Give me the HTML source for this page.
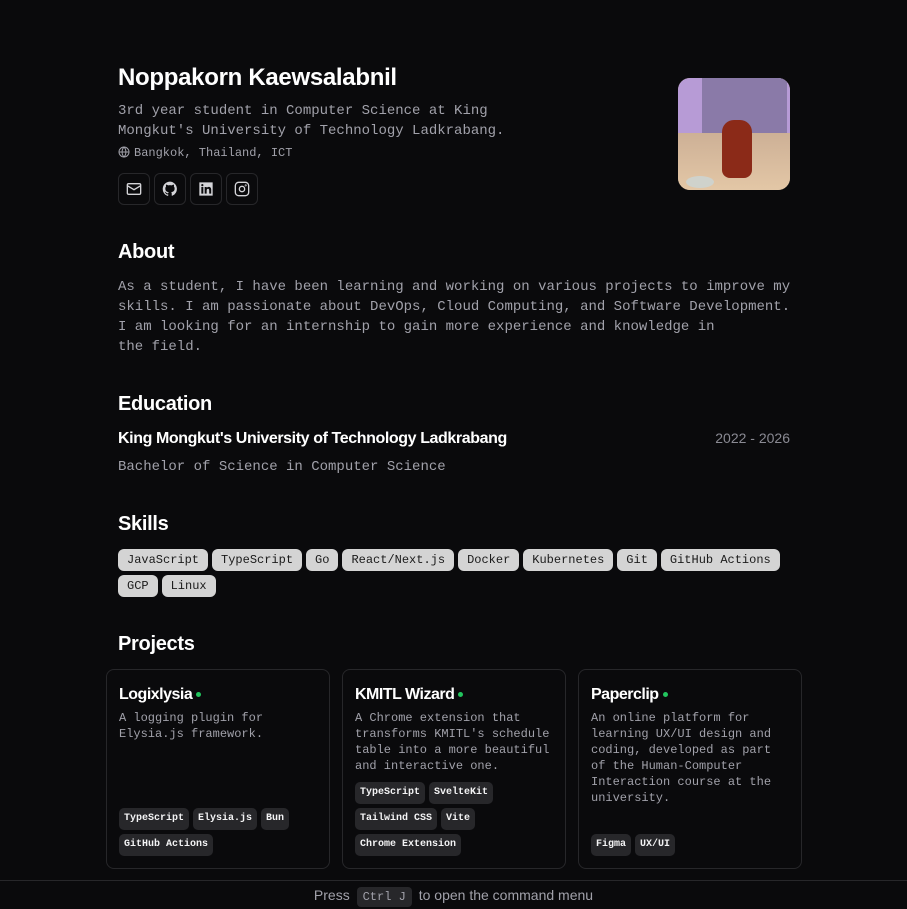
<!DOCTYPE html>
<html><head><meta charset="utf-8"><style>
*{box-sizing:border-box;margin:0;padding:0}
body{width:907px;height:907px;background:#0a0a0c;color:#fff;font-family:"Liberation Sans",sans-serif;position:relative;overflow:hidden}
.mono{font-family:"Liberation Mono",monospace}
.abs{position:absolute}
h1{position:absolute;left:118px;top:64px;font-size:24px;font-weight:700;letter-spacing:-0.3px}
h2{position:absolute;left:118px;font-size:20px;font-weight:700;letter-spacing:-0.3px}
.gray{color:#a1a1aa}
.icon{position:absolute;top:173px;width:32px;height:32px;border:1px solid #27272a;border-radius:6px;display:flex;align-items:center;justify-content:center}
.badge{display:inline-block;background:#d4d4d4;color:#1a1a1a;font-size:12px;height:22px;line-height:22px;padding:0 9px;border-radius:6px;margin:0 4px 4px 0;font-family:"Liberation Mono",monospace}
.card{position:absolute;top:669px;width:224px;height:200px;border:1px solid #27272a;border-radius:8px;padding:12px}
.card .t{font-size:16px;font-weight:700;letter-spacing:-0.5px;margin-top:4px;height:20px}
.card .t i{display:inline-block;width:5px;height:5px;border-radius:50%;background:#22c55e;margin-left:4px;vertical-align:middle}
.card .d{font-family:"Liberation Mono",monospace;font-size:12px;line-height:16px;color:#a1a1aa;margin-top:4px}
.tags{position:absolute;left:12px;bottom:8px;width:200px;line-height:0}
.tag{display:inline-block;background:#27272a;color:#f4f4f5;font-weight:700;font-size:10px;height:22px;line-height:22px;padding:0 5px;border-radius:5px;margin:0 4px 4px 0;font-family:"Liberation Mono",monospace}
</style></head><body>
<h1>Noppakorn Kaewsalabnil</h1>
<div class="abs mono gray" style="left:118px;top:101px;font-size:14px;line-height:20px;width:420px">3rd year student in Computer Science at King Mongkut's University of Technology Ladkrabang.</div>
<div class="abs mono gray" style="left:118px;top:145px;font-size:12px;line-height:16px"><svg width="12" height="12" viewBox="0 0 24 24" fill="none" stroke="#a1a1aa" stroke-width="2" style="vertical-align:-2px;margin-right:4px"><circle cx="12" cy="12" r="10"/><path d="M2 12h20M12 2a15 15 0 0 1 0 20a15 15 0 0 1 0-20"/></svg>Bangkok, Thailand, ICT</div>
<div class="icon" style="left:118px"><svg width="16" height="16" viewBox="0 0 24 24" fill="none" stroke="#d4d4d8" stroke-width="2"><rect x="2" y="4" width="20" height="16" rx="2"/><path d="M22 7l-10 6L2 7"/></svg></div>
<div class="icon" style="left:154px"><svg width="16" height="16" viewBox="0 0 24 24" fill="#d4d4d8"><path d="M12 1a11 11 0 0 0-3.5 21.4c.6.1.8-.2.8-.5v-2c-3.1.7-3.7-1.4-3.7-1.4-.5-1.3-1.2-1.6-1.2-1.6-1-.7.1-.7.1-.7 1.1.1 1.7 1.1 1.7 1.1 1 1.7 2.6 1.2 3.2.9.1-.7.4-1.2.7-1.5-2.5-.3-5.1-1.2-5.1-5.4 0-1.2.4-2.2 1.1-3-.1-.3-.5-1.4.1-2.9 0 0 .9-.3 3 1.1a10.5 10.5 0 0 1 5.5 0c2.1-1.4 3-1.1 3-1.1.6 1.5.2 2.6.1 2.9.7.8 1.1 1.8 1.1 3 0 4.2-2.6 5.1-5.1 5.4.4.4.8 1 .8 2v3c0 .3.2.6.8.5A11 11 0 0 0 12 1z"/></svg></div>
<div class="icon" style="left:190px"><svg width="16" height="16" viewBox="0 0 24 24" fill="#d4d4d8"><path d="M2 2h20v20H2z M5 9v10h3V9z M6.5 4.5a1.7 1.7 0 1 0 0 3.4a1.7 1.7 0 0 0 0-3.4z M10 9v10h3v-5c0-1.5 1-2.3 2-2.3s1.8.7 1.8 2.3v5h3v-6c0-3-1.8-4.2-3.7-4.2-1.5 0-2.6.8-3.1 1.5V9z" fill-rule="evenodd"/></svg></div>
<div class="icon" style="left:226px"><svg width="16" height="16" viewBox="0 0 24 24" fill="none" stroke="#d4d4d8" stroke-width="2"><rect x="2" y="2" width="20" height="20" rx="5"/><circle cx="12" cy="12" r="4"/><circle cx="17.5" cy="6.5" r=".5"/></svg></div>
<div class="abs" style="left:678px;top:78px;width:112px;height:112px;border-radius:12px;overflow:hidden;background:#d9b99a">
<div class="abs" style="left:0;top:0;width:112px;height:55px;background:#b79bd6"></div>
<div class="abs" style="left:24px;top:0;width:85px;height:78px;background:#8a7aa8"></div>
<div class="abs" style="left:0;top:55px;width:112px;height:57px;background:linear-gradient(#cdb096,#e3c7a6)"></div>
<div class="abs" style="left:44px;top:42px;width:30px;height:58px;border-radius:12px 12px 8px 8px;background:#8b2a18"></div>
<div class="abs" style="left:8px;top:98px;width:28px;height:12px;border-radius:50%;background:#cfd2cc"></div>
</div>
<h2 style="top:241px">About</h2>
<div class="abs mono gray" style="left:118px;top:277px;font-size:14px;line-height:20px;width:680px">As a student, I have been learning and working on various projects to improve my skills. I am passionate about DevOps, Cloud Computing, and Software Development. I am looking for an internship to gain more experience and knowledge in<br>the field.</div>
<h2 style="top:393px">Education</h2>
<div class="abs" style="left:118px;top:430px;font-size:16px;font-weight:700;letter-spacing:-0.4px">King Mongkut's University of Technology Ladkrabang</div>
<div class="abs gray" style="right:117px;top:430px;font-size:14px;color:#8a8a93">2022 - 2026</div>
<div class="abs mono gray" style="left:118px;top:457px;font-size:14px;line-height:20px">Bachelor of Science in Computer Science</div>
<h2 style="top:513px">Skills</h2>
<div class="abs" style="left:118px;top:549px;width:690px;line-height:0"><span class="badge">JavaScript</span><span class="badge">TypeScript</span><span class="badge">Go</span><span class="badge">React/Next.js</span><span class="badge">Docker</span><span class="badge">Kubernetes</span><span class="badge">Git</span><span class="badge">GitHub Actions</span><br><span class="badge">GCP</span><span class="badge">Linux</span></div>
<h2 style="top:633px">Projects</h2>
<div class="card" style="left:106px"><div class="t">Logixlysia<i></i></div><div class="d">A logging plugin for Elysia.js framework.</div><div class="tags"><span class="tag">TypeScript</span><span class="tag">Elysia.js</span><span class="tag">Bun</span><span class="tag">GitHub Actions</span></div></div>
<div class="card" style="left:342px"><div class="t">KMITL Wizard<i></i></div><div class="d">A Chrome extension that transforms KMITL's schedule table into a more beautiful and interactive one.</div><div class="tags"><span class="tag">TypeScript</span><span class="tag">SvelteKit</span><span class="tag">Tailwind CSS</span><span class="tag">Vite</span><span class="tag">Chrome Extension</span></div></div>
<div class="card" style="left:578px"><div class="t">Paperclip<i></i></div><div class="d">An online platform for learning UX/UI design and coding, developed as part of the Human-Computer Interaction course at the university.</div><div class="tags"><span class="tag">Figma</span><span class="tag">UX/UI</span></div></div>
<div class="abs" style="left:0;top:880px;width:907px;height:27px;border-top:1px solid #27272a;background:#0a0a0c;text-align:center;font-size:14px;color:#a1a1aa;line-height:28px">Press <span class="mono" style="display:inline-block;background:#27272a;border-radius:4px;font-size:12px;padding:0 6px;line-height:20px;height:20px;margin:0 3px">Ctrl J</span> to open the command menu</div>
</body></html>
